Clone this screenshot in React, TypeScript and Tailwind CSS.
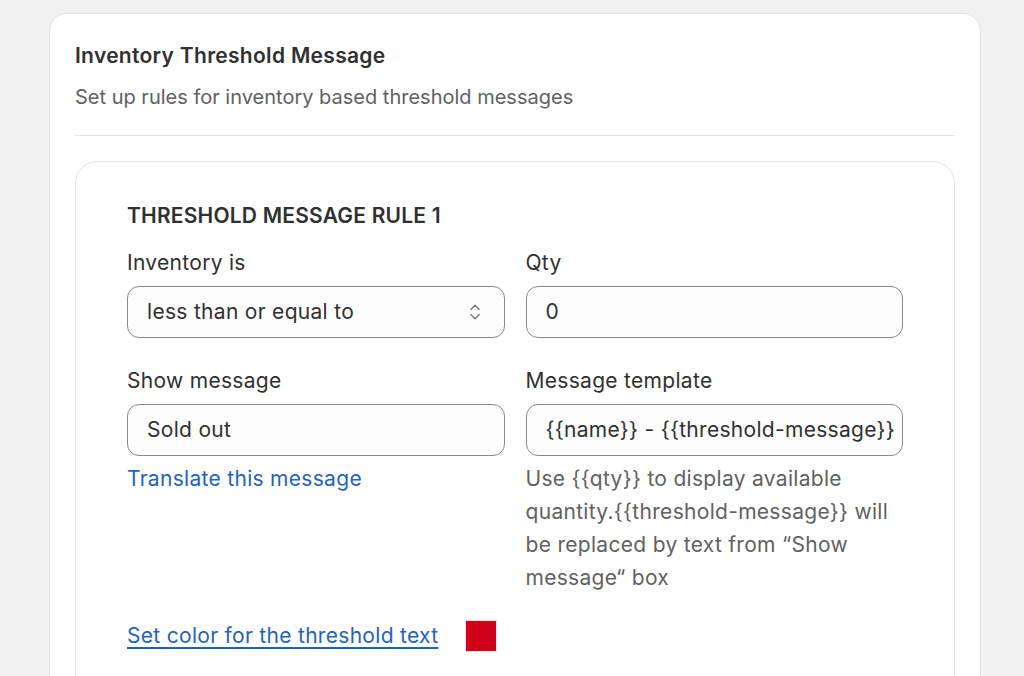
import { ChevronsUpDown } from "lucide-react";

function Field({ label, children }: { label: string; children: React.ReactNode }) {
  return (
    <div className="flex flex-col">
      <label className="text-[21px] leading-[26px] tracking-[0.3px] text-[#303030]">{label}</label>
      <div className="mt-[10px]">{children}</div>
    </div>
  );
}

function Box({ children }: { children: React.ReactNode }) {
  return (
    <div className="flex h-[52px] items-center justify-between overflow-hidden rounded-[12px] border border-[#8a8a8a] bg-[#fdfdfd] px-[19px] text-[21px] tracking-[0.3px] text-[#303030]">
      {children}
    </div>
  );
}

export default function App() {
  const helpText =
    "Use {{qty}} to display available quantity.{{threshold-message}} will be replaced by text from “Show message“ box";

  return (
    <div
      className="h-[676px] overflow-hidden bg-[#f1f1f1] px-[49px] pt-[13px]"
      style={{ fontFamily: "Inter, 'Noto Sans', sans-serif" }}
    >
      <div className="h-[700px] w-[932px] rounded-[18px] border border-[#e3e3e3] bg-white px-[25px] pt-[28px]">
        <h1 className="text-[21px] font-semibold leading-[28px] tracking-[0.3px] text-[#303030]">
          Inventory Threshold Message
        </h1>
        <p className="mt-[13px] text-[20px] leading-[28px] text-[#616161]">
          Set up rules for inventory based threshold messages
        </p>
        <div className="mt-[24px] h-px bg-[#e3e3e3]" />

        <div className="mt-[25px] h-[600px] rounded-[22px] border border-[#e3e3e3] bg-white px-[51px] pt-[41px]">
          <h2 className="text-[21px] font-semibold uppercase leading-[26px] tracking-[0.2px] text-[#303030]">
            Threshold message rule 1
          </h2>

          <div className="mt-[21px] grid grid-cols-2 gap-x-[21px]">
            <Field label="Inventory is">
              <Box>
                <span>less than or equal to</span>
                <ChevronsUpDown size={20} strokeWidth={1.75} className="text-[#7a7a7a]" />
              </Box>
            </Field>
            <Field label="Qty">
              <Box>
                <span>0</span>
              </Box>
            </Field>
          </div>

          <div className="mt-[30px] grid grid-cols-2 gap-x-[21px]">
            <div>
              <Field label="Show message">
                <Box>
                  <span>Sold out</span>
                </Box>
              </Field>
              <a className="mt-[10px] block text-[21px] leading-[26px] tracking-[0.3px] text-[#1f63c2]">
                Translate this message
              </a>
            </div>
            <div>
              <Field label="Message template">
                <Box>
                  <span className="whitespace-nowrap">{"{{name}} - {{threshold-message}}"}</span>
                </Box>
              </Field>
              <p className="mt-[6px] text-[21px] leading-[33px] tracking-[0.3px] text-[#616161]">
                {helpText}
              </p>
            </div>
          </div>

          <div className="mt-[26px] flex items-center gap-[27px]">
            <a className="text-[21px] leading-[26px] tracking-[0.3px] text-[#1f63c2] underline underline-offset-[4px]">
              Set color for the threshold text
            </a>
            <span className="h-[32px] w-[32px] border border-[#e3e3e3] bg-[#d0011b]" />
          </div>
        </div>
      </div>
    </div>
  );
}
